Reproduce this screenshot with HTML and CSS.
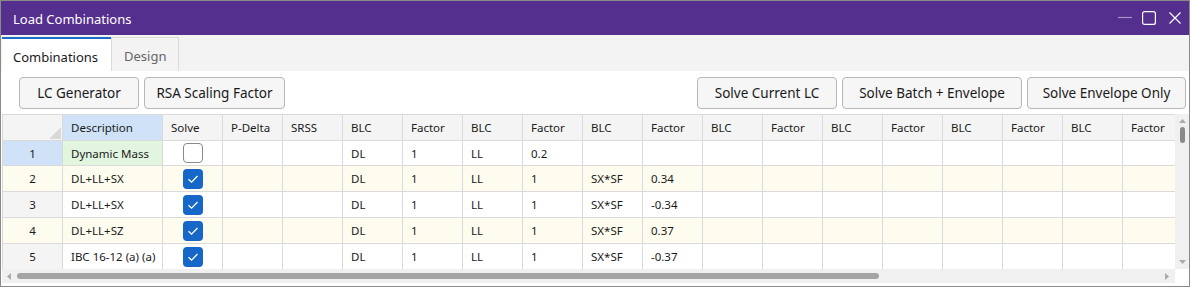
FILE: index.html
```html
<!DOCTYPE html>
<html lang="en">
<head>
    <meta charset="UTF-8">
    <meta name="viewport" content="width=device-width, initial-scale=1.0">
    <title>Load Combinations</title>
    <link rel="stylesheet" href="styles.css">
</head>
<body>
<div class="window">
    <div class="titlebar">
        <span class="title">Load Combinations</span>
        <div class="controls">
            <svg class="ctl-min" width="14" height="14" viewBox="0 0 14 14"><line x1="0" y1="6.5" x2="14" y2="6.5" stroke="#a792ca" stroke-width="1.2"/></svg>
            <svg class="ctl-max" width="14" height="14" viewBox="0 0 14 14"><rect x="0.6" y="0.6" width="12.8" height="12.8" rx="2" fill="none" stroke="#fff" stroke-width="1.2"/></svg>
            <svg class="ctl-close" width="12" height="12" viewBox="0 0 12 12"><path d="M0.5 0.5 L11.5 11.5 M11.5 0.5 L0.5 11.5" stroke="#fff" stroke-width="1.2"/></svg>
        </div>
    </div>

    <div class="tabs">
        <div class="tab tab-active">Combinations</div>
        <div class="tab tab-idle">Design</div>
    </div>

    <div class="toolbar">
        <button class="btn btn-gen">LC Generator</button>
        <button class="btn btn-rsa">RSA Scaling Factor</button>
        <div class="spacer"></div>
        <button class="btn btn-cur">Solve Current LC</button>
        <button class="btn btn-batch">Solve Batch + Envelope</button>
        <button class="btn btn-env">Solve Envelope Only</button>
    </div>

    <div class="grid-frame">
        <div class="sheet">
            <div class="cells">
                <div class="row head">
                    <div class="c corner"><svg width="12" height="12" viewBox="0 0 12 12"><polygon points="12,0 12,12 0,12" fill="#d9d9d9"/></svg></div>
                    <div class="c sel">Description</div>
                    <div class="c">Solve</div>
                    <div class="c">P-Delta</div>
                    <div class="c">SRSS</div>
                    <div class="c">BLC</div><div class="c">Factor</div>
                    <div class="c">BLC</div><div class="c">Factor</div>
                    <div class="c">BLC</div><div class="c">Factor</div>
                    <div class="c">BLC</div><div class="c">Factor</div>
                    <div class="c">BLC</div><div class="c">Factor</div>
                    <div class="c">BLC</div><div class="c">Factor</div>
                    <div class="c">BLC</div><div class="c">Factor</div>
                </div>

                <div class="row">
                    <div class="c rh sel">1</div>
                    <div class="c mass">Dynamic Mass</div>
                    <div class="c chk"><span class="box"></span></div>
                    <div class="c"></div><div class="c"></div>
                    <div class="c">DL</div><div class="c">1</div>
                    <div class="c">LL</div><div class="c">0.2</div>
                    <div class="c"></div><div class="c"></div>
                    <div class="c"></div><div class="c"></div>
                    <div class="c"></div><div class="c"></div>
                    <div class="c"></div><div class="c"></div>
                    <div class="c"></div><div class="c"></div>
                </div>

                <div class="row alt">
                    <div class="c rh">2</div>
                    <div class="c">DL+LL+SX</div>
                    <div class="c chk"><svg width="20" height="20" viewBox="0 0 20 20"><rect width="20" height="20" rx="4" fill="#1767c8"/><path d="M5.5 10.2 L8.6 13.2 L14.5 7" fill="none" stroke="#fff" stroke-width="1.3"/></svg></div>
                    <div class="c"></div><div class="c"></div>
                    <div class="c">DL</div><div class="c">1</div>
                    <div class="c">LL</div><div class="c">1</div>
                    <div class="c">SX*SF</div><div class="c">0.34</div>
                    <div class="c"></div><div class="c"></div>
                    <div class="c"></div><div class="c"></div>
                    <div class="c"></div><div class="c"></div>
                    <div class="c"></div><div class="c"></div>
                </div>

                <div class="row">
                    <div class="c rh">3</div>
                    <div class="c">DL+LL+SX</div>
                    <div class="c chk"><svg width="20" height="20" viewBox="0 0 20 20"><rect width="20" height="20" rx="4" fill="#1767c8"/><path d="M5.5 10.2 L8.6 13.2 L14.5 7" fill="none" stroke="#fff" stroke-width="1.3"/></svg></div>
                    <div class="c"></div><div class="c"></div>
                    <div class="c">DL</div><div class="c">1</div>
                    <div class="c">LL</div><div class="c">1</div>
                    <div class="c">SX*SF</div><div class="c">-0.34</div>
                    <div class="c"></div><div class="c"></div>
                    <div class="c"></div><div class="c"></div>
                    <div class="c"></div><div class="c"></div>
                    <div class="c"></div><div class="c"></div>
                </div>

                <div class="row alt">
                    <div class="c rh">4</div>
                    <div class="c">DL+LL+SZ</div>
                    <div class="c chk"><svg width="20" height="20" viewBox="0 0 20 20"><rect width="20" height="20" rx="4" fill="#1767c8"/><path d="M5.5 10.2 L8.6 13.2 L14.5 7" fill="none" stroke="#fff" stroke-width="1.3"/></svg></div>
                    <div class="c"></div><div class="c"></div>
                    <div class="c">DL</div><div class="c">1</div>
                    <div class="c">LL</div><div class="c">1</div>
                    <div class="c">SX*SF</div><div class="c">0.37</div>
                    <div class="c"></div><div class="c"></div>
                    <div class="c"></div><div class="c"></div>
                    <div class="c"></div><div class="c"></div>
                    <div class="c"></div><div class="c"></div>
                </div>

                <div class="row">
                    <div class="c rh">5</div>
                    <div class="c">IBC 16-12 (a) (a)</div>
                    <div class="c chk"><svg width="20" height="20" viewBox="0 0 20 20"><rect width="20" height="20" rx="4" fill="#1767c8"/><path d="M5.5 10.2 L8.6 13.2 L14.5 7" fill="none" stroke="#fff" stroke-width="1.3"/></svg></div>
                    <div class="c"></div><div class="c"></div>
                    <div class="c">DL</div><div class="c">1</div>
                    <div class="c">LL</div><div class="c">1</div>
                    <div class="c">SX*SF</div><div class="c">-0.37</div>
                    <div class="c"></div><div class="c"></div>
                    <div class="c"></div><div class="c"></div>
                    <div class="c"></div><div class="c"></div>
                    <div class="c"></div><div class="c"></div>
                </div>
            </div>
        </div>

        <div class="vscroll">
            <svg width="7" height="4" viewBox="0 0 7 4"><polygon points="3.5,0 7,4 0,4" fill="#ababab"/></svg>
            <div class="vthumb"></div>
            <div class="spacer"></div>
            <svg width="7" height="4" viewBox="0 0 7 4"><polygon points="0,0 7,0 3.5,4" fill="#ababab"/></svg>
        </div>
        <div class="hscroll">
            <svg width="4" height="7" viewBox="0 0 4 7"><polygon points="0,3.5 4,0 4,7" fill="#ababab"/></svg>
            <div class="hthumb"></div>
            <div class="spacer"></div>
            <svg width="4" height="7" viewBox="0 0 4 7"><polygon points="0,0 4,3.5 0,7" fill="#ababab"/></svg>
        </div>
        <div class="corner-box"></div>
    </div>
</div>
</body>
</html>
```

FILE: styles.css
```css
* {
    box-sizing: border-box;
}
body {
    margin: 0;
    background: #fff;
    font-family: "Noto Sans", "Open Sans", sans-serif;
    color: #1a1a1a;
}
.window {
    width: 1190px;
    height: 287px;
    border: 1px solid #8a8a8a;
    display: flex;
    flex-direction: column;
    overflow: hidden;
}

/* title bar */
.titlebar {
    flex: none;
    height: 34px;
    background: #552f8d;
    color: #fff;
    display: flex;
    align-items: center;
    justify-content: space-between;
    padding: 0 8px 0 12px;
}
.title {
    font-size: 13px;
    padding-top: 2px;
}
.controls {
    display: flex;
    align-items: center;
}
.controls svg {
    display: block;
}
.ctl-min {
    margin-right: 10px;
}
.ctl-max {
    margin-right: 13px;
}

/* tabs */
.tabs {
    flex: none;
    height: 36px;
    background: #f3f3f3;
    display: flex;
    align-items: flex-end;
    padding-left: 1px;
}
.tab {
    height: 34px;
    display: flex;
    align-items: center;
    padding-top: 3px;
    font-size: 13px;
}
.tab-active {
    width: 109px;
    background: #fff;
    border-top: 2px solid #1a6ec8;
    padding-left: 11px;
}
.tab-idle {
    width: 68px;
    border: 1px solid #dadada;
    border-bottom: none;
    color: #666;
    padding-left: 12px;
}

/* buttons */
.toolbar {
    flex: none;
    display: flex;
    gap: 5px;
    padding: 6px 3px 5px 18px;
}
.spacer {
    flex: 1;
}
.btn {
    height: 32px;
    border: 1px solid #b7b7b7;
    border-radius: 4px;
    background: #f6f6f6;
    font: 13.5px "Noto Sans", "Open Sans", sans-serif;
    color: #1a1a1a;
    padding: 0;
}
.btn-gen { width: 120px; }
.btn-rsa { width: 141px; }
.btn-cur { width: 140px; }
.btn-batch { width: 180px; }
.btn-env { width: 159px; }

/* grid */
.grid-frame {
    flex: none;
    height: 169px;
    margin-left: 1px;
    display: grid;
    grid-template-columns: 1fr 14px;
    grid-template-rows: 155px 14px;
}
.sheet {
    overflow: hidden;
}
.cells {
    display: grid;
    grid-template-columns: 59px 99px repeat(17, 59px);
    grid-template-rows: 25px 24px 25px 25px 25px 25px;
    gap: 1px;
    padding: 1px 0 0 1px;
    background: #dadada;
    width: max-content;
}
.row {
    display: contents;
}
.c {
    background: #fff;
    font-size: 11.5px;
    display: flex;
    align-items: center;
    padding-left: 8px;
    white-space: nowrap;
    overflow: hidden;
}
.head .c {
    background: #f4f4f4;
}
.row.alt .c {
    background: #fefcee;
}
.row .rh {
    background: #f4f4f4;
    justify-content: center;
    padding-left: 0;
}
.head .corner {
    justify-content: flex-end;
    align-items: flex-end;
    padding: 0 1px 1px 0;
}
.corner svg {
    display: block;
}
.row .sel {
    background: #cfe2f7;
}
.row .mass {
    background: #e1f5df;
}
.row .chk {
    justify-content: center;
    padding-left: 0;
}
.chk svg {
    display: block;
}
.box {
    width: 20px;
    height: 20px;
    border: 1px solid #8a8a8a;
    border-radius: 4px;
    background: #fff;
}

/* scrollbars */
.vscroll {
    background: #f0f0f0;
    display: flex;
    flex-direction: column;
    align-items: center;
    padding: 5px 0 5px;
}
.vscroll svg, .hscroll svg {
    display: block;
}
.vthumb {
    width: 5px;
    height: 16px;
    margin-top: 4px;
    border-radius: 3px;
    background: #8a8a8a;
}
.hscroll {
    background: #f0f0f0;
    display: flex;
    align-items: center;
    padding: 0 6px 0 5px;
}
.hthumb {
    width: 862px;
    height: 6px;
    margin-left: 6px;
    border-radius: 3px;
    background: #a4a4a4;
}
.corner-box {
    background: #fff;
}
```
